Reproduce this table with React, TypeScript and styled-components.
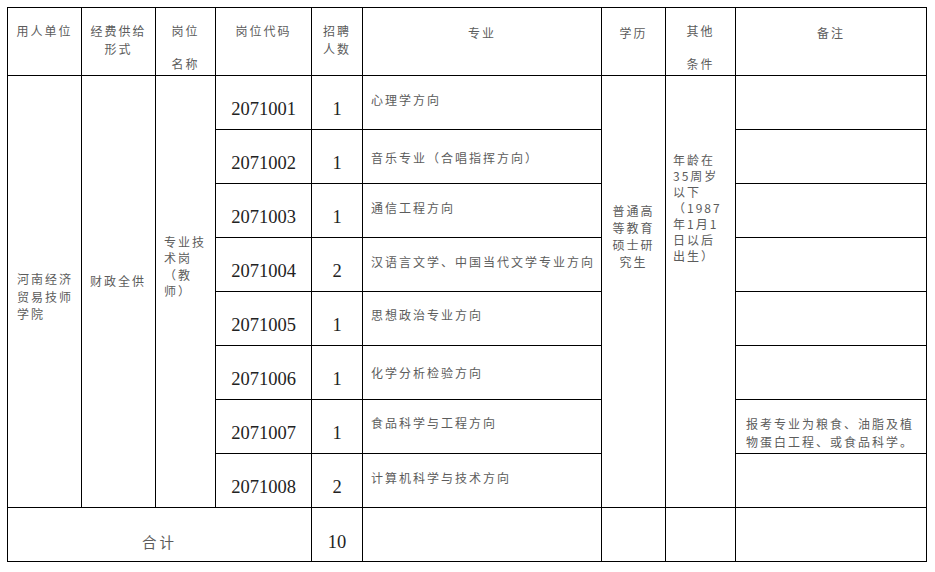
import React from "react";
import styled, { createGlobalStyle } from "styled-components";

const GlobalStyle = createGlobalStyle`
  html, body { margin: 0; padding: 0; background: #fff; }
  body { width: 935px; height: 572px; overflow: hidden; }
`;

const Page = styled.div`
  padding: 7px 0 0 7px;
  background: #fff;
`;

const Table = styled.table`
  border-collapse: collapse;
  table-layout: fixed;
  width: 919px;
  font-family: "Noto Sans CJK SC", "Noto Sans CJK JP", sans-serif;
  font-size: 12px;
  color: #5c5c5c;
  letter-spacing: 2px;
`;

const Row = styled.tr<{ $h: number }>`
  height: ${(p) => p.$h}px;
`;

const HeadCell = styled.th`
  border: 1px solid #000;
  padding: 14px 0 0 0;
  vertical-align: top;
  text-align: center;
  font-weight: normal;
  line-height: 18px;
`;

const HeadLine = styled.span<{ $gap?: number }>`
  display: block;
  margin-top: ${(p) => p.$gap ?? 0}px;
  white-space: nowrap;
`;

const MergedCell = styled.td<{
  $align: "left" | "center";
  $pl: number;
  $pt: number;
  $pb: number;
  $lh: number;
}>`
  border: 1px solid #000;
  vertical-align: middle;
  text-align: ${(p) => p.$align};
  padding: ${(p) => `${p.$pt}px 0 ${p.$pb}px ${p.$pl}px`};
  line-height: ${(p) => p.$lh}px;
`;

const TextLine = styled.span`
  display: block;
  white-space: nowrap;
`;

const NumberCell = styled.td`
  border: 1px solid #000;
  padding: 12px 0 0 0;
  vertical-align: middle;
  text-align: center;
  font-family: "Liberation Serif", "Times New Roman", serif;
  font-size: 18.5px;
  letter-spacing: 0;
  color: #222;
  line-height: 20px;
`;

const MajorCell = styled.td<{ $drop: number }>`
  border: 1px solid #000;
  vertical-align: top;
  text-align: left;
  white-space: nowrap;
  padding: ${(p) => 15 + p.$drop}px 0 0 8px;
  line-height: 17px;
`;

const NoteCell = styled.td`
  border: 1px solid #000;
  vertical-align: top;
  text-align: left;
  padding: 15px 0 0 10px;
  line-height: 17.5px;
`;

const EmptyCell = styled.td`
  border: 1px solid #000;
  padding: 0;
`;

const TotalLabel = styled.td`
  border: 1px solid #000;
  vertical-align: middle;
  text-align: center;
  padding: 15px 0 0 0;
  font-size: 14.5px;
  letter-spacing: 3px;
  line-height: 20px;
`;

const TotalNumber = styled(NumberCell)`
  padding-top: 15px;
`;

type Item = {
  code: string;
  count: number;
  major: string;
  drop: number;
  note?: string[];
};

const rows: Item[] = [
  { code: "2071001", count: 1, major: "心理学方向", drop: 0 },
  { code: "2071002", count: 1, major: "音乐专业（合唱指挥方向）", drop: 4 },
  { code: "2071003", count: 1, major: "通信工程方向", drop: 0 },
  { code: "2071004", count: 2, major: "汉语言文学、中国当代文学专业方向", drop: 0 },
  { code: "2071005", count: 1, major: "思想政治专业方向", drop: -1 },
  { code: "2071006", count: 1, major: "化学分析检验方向", drop: 3 },
  {
    code: "2071007",
    count: 1,
    major: "食品科学与工程方向",
    drop: -1,
    note: ["报考专业为粮食、油脂及植", "物蛋白工程、或食品科学。"],
  },
  { code: "2071008", count: 2, major: "计算机科学与技术方向", drop: 0 },
];

const colWidths = [74, 74, 60, 96, 51, 239, 64, 70, 191];

const Lines: React.FC<{ items: string[] }> = ({ items }) => (
  <>
    {items.map((t, i) => (
      <TextLine key={i}>{t}</TextLine>
    ))}
  </>
);

export default function App() {
  return (
    <>
      <GlobalStyle />
      <Page>
        <Table>
          <colgroup>
            {colWidths.map((w, i) => (
              <col key={i} style={{ width: w }} />
            ))}
          </colgroup>
          <tbody>
            <Row $h={68}>
              <HeadCell>
                <HeadLine>用人单位</HeadLine>
              </HeadCell>
              <HeadCell>
                <HeadLine>经费供给</HeadLine>
                <HeadLine>形式</HeadLine>
              </HeadCell>
              <HeadCell>
                <HeadLine>岗位</HeadLine>
                <HeadLine $gap={15}>名称</HeadLine>
              </HeadCell>
              <HeadCell>
                <HeadLine>岗位代码</HeadLine>
              </HeadCell>
              <HeadCell>
                <HeadLine>招聘</HeadLine>
                <HeadLine>人数</HeadLine>
              </HeadCell>
              <HeadCell>
                <HeadLine $gap={2}>专业</HeadLine>
              </HeadCell>
              <HeadCell>
                <HeadLine $gap={2}>学历</HeadLine>
              </HeadCell>
              <HeadCell>
                <HeadLine>其他</HeadLine>
                <HeadLine $gap={15}>条件</HeadLine>
              </HeadCell>
              <HeadCell>
                <HeadLine $gap={2}>备注</HeadLine>
              </HeadCell>
            </Row>
            {rows.map((r, i) => (
              <Row $h={54} key={r.code}>
                {i === 0 && (
                  <>
                    <MergedCell rowSpan={8} $align="left" $pl={9} $pt={10} $pb={0} $lh={17.5}>
                      <Lines items={["河南经济", "贸易技师", "学院"]} />
                    </MergedCell>
                    <MergedCell rowSpan={8} $align="left" $pl={8} $pt={0} $pb={22} $lh={17}>
                      <Lines items={["财政全供"]} />
                    </MergedCell>
                    <MergedCell rowSpan={8} $align="left" $pl={8} $pt={0} $pb={50} $lh={16.5}>
                      <Lines items={["专业技", "术岗", "（教", "师）"]} />
                    </MergedCell>
                  </>
                )}
                <NumberCell>{r.code}</NumberCell>
                <NumberCell>{r.count}</NumberCell>
                <MajorCell $drop={r.drop}>{r.major}</MajorCell>
                {i === 0 && (
                  <>
                    <MergedCell rowSpan={8} $align="center" $pl={0} $pt={0} $pb={112} $lh={17}>
                      <Lines items={["普通高", "等教育", "硕士研", "究生"]} />
                    </MergedCell>
                    <MergedCell rowSpan={8} $align="left" $pl={7} $pt={0} $pb={167} $lh={16}>
                      <Lines
                        items={["年龄在", "35周岁", "以下", "（1987", "年1月1", "日以后", "出生）"]}
                      />
                    </MergedCell>
                  </>
                )}
                {r.note ? (
                  <NoteCell>
                    <Lines items={r.note} />
                  </NoteCell>
                ) : (
                  <EmptyCell />
                )}
              </Row>
            ))}
            <Row $h={54}>
              <TotalLabel colSpan={4}>合计</TotalLabel>
              <TotalNumber>10</TotalNumber>
              <EmptyCell />
              <EmptyCell />
              <EmptyCell />
              <EmptyCell />
            </Row>
          </tbody>
        </Table>
      </Page>
    </>
  );
}
